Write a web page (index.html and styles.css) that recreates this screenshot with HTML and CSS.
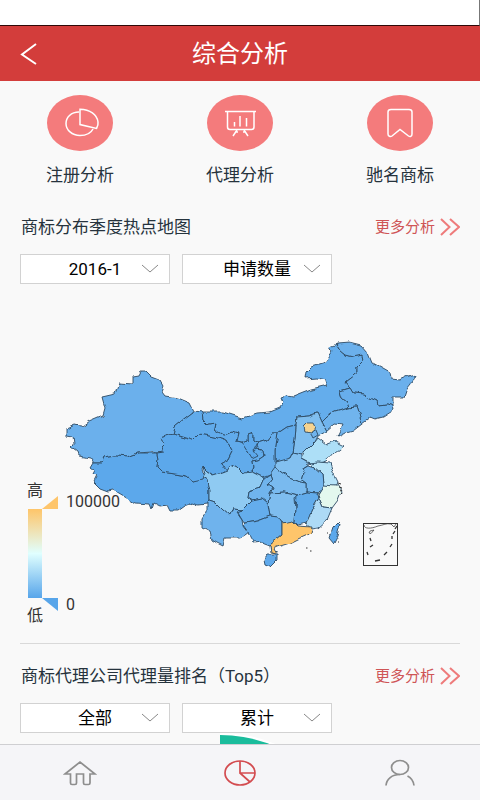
FILE: index.html
```html
<!DOCTYPE html>
<html lang="zh-CN">
<head>
    <meta charset="UTF-8">
    <meta name="viewport" content="width=device-width, initial-scale=1.0">
    <title>综合分析</title>
    <link rel="stylesheet" href="styles.css">
</head>
<body>
    <div class="status-bar"></div>

    <header class="header">
        <a class="back" href="#" aria-label="返回">
            <svg width="18" height="24" viewBox="0 0 18 24"><path d="M16 2L2 12.500L16 22"/></svg>
        </a>
        <h1>综合分析</h1>
    </header>

    <main class="content">
        <!-- 分析入口 -->
        <nav class="entries">
            <a class="entry" href="#">
                <svg width="66" height="56" viewBox="0 0 66 56">
                    <ellipse class="disc" cx="33" cy="28" rx="33" ry="28"/>
                    <path d="M32 17C24 17 19 22.500 19 28.500C19 35 25 40.500 33 40.500C39 40.500 44 38 46 34"/>
                    <path d="M33 14.300V29.600L49.500 33.500C51 31 51.300 29 51 27C50 19.500 43 14.500 33 14.300Z"/>
                </svg>
                <span>注册分析</span>
            </a>
            <a class="entry" href="#">
                <svg width="66" height="56" viewBox="0 0 66 56">
                    <ellipse class="disc" cx="33" cy="28" rx="33" ry="28"/>
                    <path d="M18 16.500H49M20.500 17V32C20.500 34 21.500 34.500 23 34.500H44.500C46 34.500 47 34 47 32V17"/>
                    <path d="M27.500 27V31.500M33 21V31.500M39.500 23V31.500M30 35L26 41M37 35L41 41M28 37H31M36 37H39"/>
                </svg>
                <span>代理分析</span>
            </a>
            <a class="entry" href="#">
                <svg width="66" height="56" viewBox="0 0 66 56">
                    <ellipse class="disc" cx="33" cy="28" rx="33" ry="28"/>
                    <path d="M24 14.500H42C44 14.500 45 15.500 45 17V39C45 41.500 43 42 41.500 41L33 34.500L25 41C23.500 42 21 41.500 21 39V17C21 15.500 22 14.500 24 14.500Z"/>
                </svg>
                <span>驰名商标</span>
            </a>
        </nav>

        <!-- 热点地图 -->
        <section class="panel">
            <div class="panel-head">
                <h2>商标分布季度热点地图</h2>
                <a class="more" href="#">更多分析
                    <svg width="20" height="18" viewBox="0 0 20 18"><path d="M1 1L9.500 9L1 17M10 1L19 9L10 17"/></svg>
                </a>
            </div>
            <div class="filters">
                <div class="picker">
                    <select aria-label="季度"><option>2016-1</option></select>
                    <svg width="18" height="9" viewBox="0 0 18 9"><path d="M1 1L9 8L17 1"/></svg>
                </div>
                <div class="picker">
                    <select aria-label="指标"><option>申请数量</option></select>
                    <svg width="18" height="9" viewBox="0 0 18 9"><path d="M1 1L9 8L17 1"/></svg>
                </div>
            </div>
            <svg class="map" viewBox="20 290 440 346" role="img" aria-label="商标分布季度热点地图">
                <defs>
                    <linearGradient id="scale" x1="0" y1="0" x2="0" y2="1">
                        <stop offset="0" stop-color="#fec569"/>
                        <stop offset="0.500" stop-color="#e0ffff"/>
                        <stop offset="1" stop-color="#57a5ea"/>
                    </linearGradient>
                    <filter id="coast" x="-2%" y="-2%" width="104%" height="104%" color-interpolation-filters="sRGB">
                        <feTurbulence type="fractalNoise" baseFrequency="0.110" numOctaves="1" seed="4" result="noise"/>
                        <feDisplacementMap in="SourceGraphic" in2="noise" scale="7" xChannelSelector="R" yChannelSelector="G"/>
                    </filter>
                </defs>

                <g class="provinces" filter="url(#coast)">
                    <path class="base" fill="#64adec" d="M196 455L230 440L300 440L310 500L290 520L240 520L215 500Z"/>
                    <!-- 新疆 -->
                    <path fill="#6bb0ec" d="M194 411L190 403L178 398L165 396L162 392L164 387L160 380L152 377L146 371L141 371L139 375L133 376L133 384L119 383L115 394L102 397L105 408L103 415L89 421L82 426L75 425L66 429L66 436L72 437L73 445L71 447L78 452L79 455L90 457L94 463L102 463L104 458L115 456L128 457L138 453L153 452L157 453L164 452L162 447L165 444L160 438L173 434L175 427L185 419L193 413Z"/>
                    <!-- 西藏 -->
                    <path fill="#5ca8eb" d="M94 463L91 468L95 471L93 475L97 476L94 482L100 488L108 491L113 490L125 497L135 503L150 504L152 509L154 503L160 506L167 505L170 511L178 511L185 506L193 503L198 505L207 504L209 500L209 490L207 480L202 477L193 481L187 476L175 474L162 472L157 467L158 460L157 453L138 453L128 457L115 456L104 458L102 463Z"/>
                    <!-- 青海 -->
                    <path fill="#5ca8eb" d="M157 453L164 452L162 447L165 444L160 438L173 434L183 437L193 440L199 434L215 437L227 441L233 452L229 460L220 465L225 471L220 474L213 476L207 472L202 467L201 470L204 475L202 479L193 481L187 476L175 474L162 472L157 467L158 460Z"/>
                    <!-- 甘肃 -->
                    <path fill="#61abeb" d="M194 411L202 412L203 419L208 424L215 423L214 429L223 435L233 432L239 434L237 442L245 444L250 456L257 448L263 449L264 456L258 460L252 461L253 468L250 474L243 473L238 468L232 465L228 471L220 465L229 460L233 452L227 441L215 437L199 434L193 440L183 437L173 434L175 427L185 419L193 413Z"/>
                    <!-- 宁夏 -->
                    <path fill="#5ca8eb" d="M242 443L248 441L248 435L253 433L253 440L258 443L254 451L258 456L252 459L247 451Z"/>
                    <!-- 内蒙古 -->
                    <path fill="#64adec" d="M202 412L223 412L242 418L257 413L270 412L280 408L283 403L281 398L287 396L293 397L303 393L311 390L328 386L325 380L317 378L305 379L306 373L312 367L325 363L333 352L330 347L338 344L337 348L345 355L353 357L362 355L363 360L358 365L358 372L345 382L350 388L340 391L342 398L347 402L349 408L335 412L327 417L322 422L318 413L310 416L297 417L296 425L287 427L278 433L272 433L267 440L258 443L253 440L253 433L248 435L248 441L242 443L237 442L239 434L233 432L223 435L214 429L215 423L208 424L203 419Z"/>
                    <!-- 黑龙江 吉林 辽宁 -->
                    <path fill="#6bb0ec" d="M338 344L350 343L362 346L368 353L372 363L383 369L390 373L391 379L400 380L407 377L415 375L411 383L407 388L404 397L393 397L393 406L387 404L378 405L377 401L370 398L363 394L353 393L350 388L345 382L358 372L358 365L363 360L362 355L353 357L345 355L337 348Z"/>
                    <path fill="#67aeec" d="M350 388L353 393L363 394L370 398L377 401L378 405L387 404L393 406L394 410L383 417L375 419L370 417L362 423L358 413L356 407L349 408L347 402L342 398L340 391Z"/>
                    <path fill="#70b4ed" d="M349 408L356 407L358 413L362 423L353 430L343 433L337 436L340 430L342 425L335 424L327 431L322 422L327 417L335 412Z"/>
                    <!-- 河北 北京 天津 -->
                    <path fill="#7fbeef" d="M297 417L310 416L318 413L322 422L327 431L318 436L315 442L305 452L302 454L293 452L295 438L296 425Z"/>
                    <path fill="#f6d38f" d="M304 431L303 427L307 423L313 423L315 427L312 432Z"/>
                    <path fill="#70b4ed" d="M312 430L316 430L318 435L313 438L311 434Z"/>
                    <!-- 山西 陕西 -->
                    <path fill="#61abeb" d="M296 425L295 438L293 452L290 458L282 461L275 462L275 452L277 440L278 433L287 427Z"/>
                    <path fill="#67aeec" d="M278 433L277 440L275 452L275 462L277 468L270 474L262 477L252 472L253 468L252 461L258 460L264 456L263 449L257 448L258 443L267 440L272 433Z"/>
                    <!-- 山东 河南 -->
                    <path fill="#addff7" d="M318 438L327 445L335 442L343 446L335 452L327 461L317 464L310 463L302 459L305 452L315 442Z"/>
                    <path fill="#82c0f0" d="M275 462L290 458L293 452L302 454L302 459L309 463L302 468L305 473L303 480L307 483L300 482L290 478L281 472L275 467Z"/>
                    <!-- 江苏 安徽 -->
                    <path fill="#b6e3f8" d="M309 463L318 462L330 463L333 472L338 482L337 486L330 487L323 485L322 475L313 467Z"/>
                    <path fill="#73b6ee" d="M302 468L307 465L313 467L322 475L323 485L318 493L307 492L307 483L303 480L305 473Z"/>
                    <!-- 湖北 湖南 江西 -->
                    <path fill="#79baef" d="M270 474L275 467L281 472L290 478L300 482L307 483L307 492L297 495L285 492L270 493L273 488L268 485L272 480Z"/>
                    <path fill="#7ebdef" d="M270 493L285 492L297 495L295 498L296 510L295 522L282 523L278 517L270 516L268 503Z"/>
                    <path fill="#61abeb" d="M297 495L307 492L318 493L319 498L312 510L307 523L298 525L295 522L296 510Z"/>
                    <!-- 浙江 福建 -->
                    <path fill="#e3f8ee" d="M323 485L337 486L341 492L338 500L332 508L323 507L319 498L318 493Z"/>
                    <path fill="#addaf6" d="M319 498L323 507L332 508L327 520L318 528L312 529L306 524L312 510Z"/>
                    <!-- 四川 重庆 -->
                    <path fill="#8fcaf2" d="M202 467L207 472L213 476L220 474L228 471L232 465L238 468L243 473L252 472L264 478L260 487L248 491L247 497L252 500L242 510L233 509L230 516L223 510L215 502L209 500L209 490L207 480L202 477L204 473Z"/>
                    <path fill="#70b4ed" d="M264 478L270 474L272 480L268 485L273 488L270 493L268 503L262 498L252 500L247 497L248 491L260 487Z"/>
                    <!-- 贵州 云南 广西 -->
                    <path fill="#64adec" d="M237 510L242 510L252 500L262 498L268 503L270 516L257 521L245 523L242 519Z"/>
                    <path fill="#6fb3ed" d="M207 502L209 500L215 502L223 510L230 516L233 509L242 510L237 512L242 519L243 525L249 532L245 535L240 538L225 538L223 546L217 543L212 540L210 532L202 528L202 520L207 512Z"/>
                    <path fill="#64adec" d="M245 523L257 521L270 516L278 517L282 523L282 535L270 545L262 542L253 543L250 538L248 532L243 525Z"/>
                    <!-- 广东 海南 台湾 -->
                    <path fill="#fec56b" d="M282 535L282 523L293 521L298 526L312 527L311 533L300 538L290 543L277 547L273 549L276 554L271 553L270 545Z"/>
                    <path fill="#5fa9eb" d="M264 560L268 555L277 555L277 560L270 567L265 565Z"/>
                    <path fill="#5ca8eb" d="M338 522L340 524L337 537L334 543L329 537L332 528Z"/>
                </g>
                <path class="islets" d="M306 548H307.500M310 551H311.500M327 533H328M338 542H339M339 487L342 488M340 491L342 490M341 494L342 493M338 483L341 484"/>

                <!-- 南海诸岛 -->
                <g class="inset">
                    <rect x="363.500" y="523.500" width="34" height="42"/>
                    <path d="M364 525C364 529 371 529 378 526C384 525 386 523 391 524L394 527L396 524M370 531L374 530L371 533.500L369 533Z"/>
                    <path class="dash" d="M370 538L371 541M370 547L373 545M367 552L368 555M375 561L380 560M384 555L387 552M390 547L392 544M392 539V536M393 534L395 531M395 529L397 526"/>
                </g>

                <!-- 图例 -->
                <rect x="28" y="509" width="14" height="89" fill="url(#scale)"/>
                <path fill="#fec56b" d="M58 496V509H42Z"/>
                <path fill="#57a5ea" d="M42 598H58V611Z"/>
                <g class="legend">
                    <text x="27" y="496">高</text>
                    <text x="27" y="621">低</text>
                    <text x="66" y="507">100000</text>
                    <text x="66" y="610">0</text>
                </g>
            </svg>
        </section>

        <!-- 代理量排名 -->
        <section class="panel">
            <div class="panel-head">
                <h2>商标代理公司代理量排名（Top5）</h2>
                <a class="more" href="#">更多分析
                    <svg width="20" height="18" viewBox="0 0 20 18"><path d="M1 1L9.500 9L1 17M10 1L19 9L10 17"/></svg>
                </a>
            </div>
            <div class="filters">
                <div class="picker">
                    <select aria-label="范围"><option>全部</option></select>
                    <svg width="18" height="9" viewBox="0 0 18 9"><path d="M1 1L9 8L17 1"/></svg>
                </div>
                <div class="picker">
                    <select aria-label="统计方式"><option>累计</option></select>
                    <svg width="18" height="9" viewBox="0 0 18 9"><path d="M1 1L9 8L17 1"/></svg>
                </div>
            </div>
            <svg class="pie" viewBox="0 0 440 206">
                <path fill="#fff" d="M200 0A124 104 0 0 1 324 104H200Z"/>
                <path fill="#1abc9c" d="M200 2A120 102 0 0 1 320 104H200Z"/>
            </svg>
        </section>
    </main>

    <nav class="tabs">
        <a href="#" aria-label="首页">
            <svg width="34" height="28" viewBox="0 0 34 28"><path d="M2 15L17 3L32 15H27V24C27 25 26.500 25.500 25.500 25.500H22C21 25.500 20.500 25 20.500 24V15H13.500V24C13.500 25 13 25.500 12 25.500H9C8 25.500 7.500 25 7.500 24V15Z"/></svg>
        </a>
        <a class="active" href="#" aria-label="分析">
            <svg width="34" height="28" viewBox="0 0 34 28"><ellipse cx="17" cy="14" rx="15" ry="12"/><path d="M17 2V14H32M17 14L27 23"/></svg>
        </a>
        <a href="#" aria-label="我的">
            <svg width="34" height="28" viewBox="0 0 34 28"><ellipse cx="17" cy="8.500" rx="8.500" ry="7"/><path d="M3 26.500C3.500 20 9 15.500 17 15.500M24.500 17C28.500 19 30.500 22.500 31 26.500"/></svg>
        </a>
    </nav>
</body>
</html>
```

FILE: styles.css
```css
* {
    box-sizing: border-box;
}
body {
    display: flex;
    flex-direction: column;
    height: 100vh;
    margin: 0;
    background: #f9f9f9;
    color: #26333d;
    font-family: Roboto, "Noto Sans CJK SC", sans-serif;
}
a {
    color: inherit;
    text-decoration: none;
}
svg {
    display: block;
    fill: none;
}
h1, h2 {
    margin: 0;
    font-weight: normal;
}
.status-bar {
    flex: none;
    height: 26px;
    background: #fff;
    border-right: 1px solid #777;
    border-bottom: 1px solid #300808;
}
.header {
    flex: none;
    display: grid;
    grid-template-columns: 60px 1fr 60px;
    align-items: center;
    height: 55px;
    background: #d33d3b;
    color: #fff;
}
.header h1 {
    font-size: 24px;
    line-height: 32px;
    text-align: center;
}
.back {
    padding-left: 20px;
}
.back svg {
    stroke: #fff;
    stroke-width: 2;
}
.content {
    flex: 1;
    min-height: 0;
    overflow-y: auto;
    scrollbar-width: none;
}

/* 分析入口 */
.entries {
    display: grid;
    grid-template-columns: repeat(3, 1fr);
    padding-top: 14px;
}
.entry {
    display: flex;
    flex-direction: column;
    align-items: center;
    gap: 12px;
    font-size: 17px;
    line-height: 24px;
}
.entry svg {
    stroke: #fff;
    stroke-width: 1.5;
}
.entry .disc {
    fill: #f47b7c;
    stroke: none;
}

/* 面板 */
.panel {
    margin: 0 20px;
    padding-top: 28px;
}
.panel + .panel {
    padding-top: 20px;
    border-top: 1px solid #d9d9d9;
}
.panel-head {
    display: flex;
    justify-content: space-between;
    align-items: center;
    height: 24px;
}
.panel-head h2 {
    padding-left: 1px;
    font-size: 17px;
    line-height: 24px;
}
.more {
    display: flex;
    align-items: center;
    gap: 5px;
    color: #cf5556;
    font-size: 15px;
    line-height: 20px;
}
.more svg {
    stroke: #ee7b7b;
    stroke-width: 2;
}
.filters {
    display: flex;
    gap: 12px;
    padding-top: 15px;
}
.picker {
    position: relative;
    flex: 0 1 150px;
}
.picker select {
    display: block;
    width: 100%;
    height: 30px;
    padding: 0;
    border: 1px solid #d2d2d2;
    border-radius: 0;
    background: #fff;
    color: #000;
    font-family: inherit;
    font-size: 17px;
    text-align: center;
    text-align-last: center;
    appearance: none;
}
.picker svg {
    position: absolute;
    top: 10px;
    right: 11px;
    pointer-events: none;
    stroke: #888;
}

/* 地图 */
.map {
    width: 100%;
    margin-top: 6px;
    padding-bottom: 7px;
}
.provinces {
    stroke: #2d4a63;
    stroke-width: 0.9;
    stroke-linejoin: round;
}
.provinces .base {
    stroke: none;
}
.islets {
    stroke: #333;
}
.inset {
    stroke: #333;
    stroke-width: 1;
}
.inset path {
    stroke-width: 0.7;
}
.inset .dash {
    stroke-width: 1.3;
}
.legend {
    fill: #333;
    font-size: 16px;
}
.pie {
    width: 100%;
}

/* 底部导航 */
.tabs {
    flex: none;
    display: grid;
    grid-template-columns: repeat(3, 1fr);
    align-items: center;
    justify-items: center;
    height: 56px;
    border-top: 1px solid #cfcfd2;
    background: #f5f5f8;
}
.tabs svg {
    stroke: #8e8e8e;
    stroke-width: 1.7;
}
.tabs .active svg {
    stroke: #d34c50;
}
```
